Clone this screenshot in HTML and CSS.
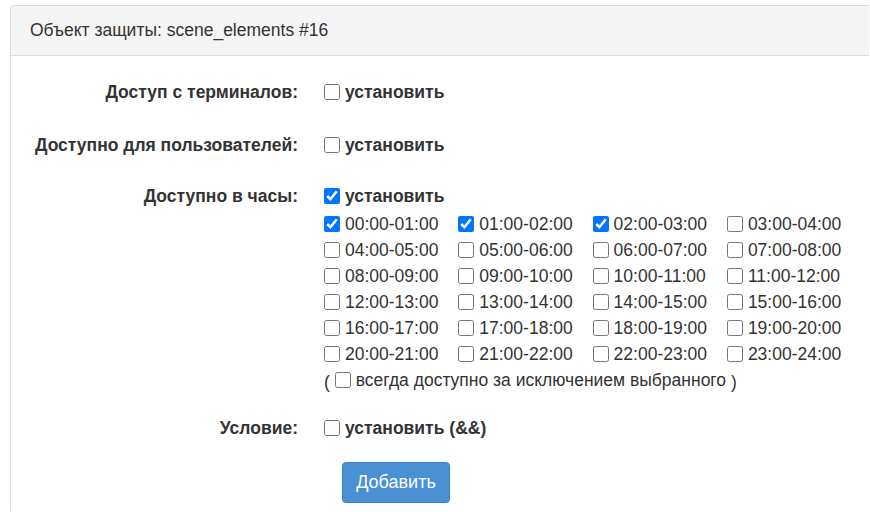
FILE: index.html
```html
<!DOCTYPE html>
<html lang="ru">
<head>
<meta charset="utf-8">
<title>Объект защиты</title>
<link rel="stylesheet" href="styles.css">
</head>
<body>
<div class="panel">
  <div class="panel-heading">Объект защиты: scene_elements #16</div>
  <div class="panel-body">
    <div class="form-row row-1">
      <div class="label">Доступ с терминалов:</div>
      <div class="field"><label class="check bold"><input type="checkbox"> установить</label></div>
    </div>
    <div class="form-row row-2">
      <div class="label">Доступно для пользователей:</div>
      <div class="field"><label class="check bold"><input type="checkbox"> установить</label></div>
    </div>
    <div class="form-row row-3">
      <div class="label">Доступно в часы:</div>
      <div class="field">
        <label class="check bold"><input type="checkbox" checked> установить</label>
        <div class="hours">
          <label class="check"><input type="checkbox" checked> 00:00-01:00</label>
          <label class="check"><input type="checkbox" checked> 01:00-02:00</label>
          <label class="check"><input type="checkbox" checked> 02:00-03:00</label>
          <label class="check"><input type="checkbox"> 03:00-04:00</label>
          <label class="check"><input type="checkbox"> 04:00-05:00</label>
          <label class="check"><input type="checkbox"> 05:00-06:00</label>
          <label class="check"><input type="checkbox"> 06:00-07:00</label>
          <label class="check"><input type="checkbox"> 07:00-08:00</label>
          <label class="check"><input type="checkbox"> 08:00-09:00</label>
          <label class="check"><input type="checkbox"> 09:00-10:00</label>
          <label class="check"><input type="checkbox"> 10:00-11:00</label>
          <label class="check"><input type="checkbox"> 11:00-12:00</label>
          <label class="check"><input type="checkbox"> 12:00-13:00</label>
          <label class="check"><input type="checkbox"> 13:00-14:00</label>
          <label class="check"><input type="checkbox"> 14:00-15:00</label>
          <label class="check"><input type="checkbox"> 15:00-16:00</label>
          <label class="check"><input type="checkbox"> 16:00-17:00</label>
          <label class="check"><input type="checkbox"> 17:00-18:00</label>
          <label class="check"><input type="checkbox"> 18:00-19:00</label>
          <label class="check"><input type="checkbox"> 19:00-20:00</label>
          <label class="check"><input type="checkbox"> 20:00-21:00</label>
          <label class="check"><input type="checkbox"> 21:00-22:00</label>
          <label class="check"><input type="checkbox"> 22:00-23:00</label>
          <label class="check"><input type="checkbox"> 23:00-24:00</label>
        </div>
        <div class="invert">( <label class="check"><input type="checkbox"> всегда доступно за исключением выбранного</label> )</div>
      </div>
    </div>
    <div class="form-row row-4">
      <div class="label">Условие:</div>
      <div class="field"><label class="check bold"><input type="checkbox"> установить (&amp;&amp;)</label></div>
    </div>
    <div class="form-row row-5">
      <div class="label"></div>
      <div class="field"><button class="btn" type="button">Добавить</button></div>
    </div>
  </div>
</div>
</body>
</html>
```
FILE: styles.css
```css
html, body {
  margin: 0;
  padding: 0;
  background: #fff;
  overflow: hidden;
}
body {
  font-family: "Liberation Sans", Arial, Helvetica, sans-serif;
  font-size: 17.5px;
  color: #333;
  width: 870px;
  height: 512px;
}
.panel {
  margin: 5px 0 0 10px;
  width: 859px;
  border: 1px solid #ddd;
  border-right: none;
  border-bottom: none;
  border-radius: 4px 0 0 0;
  height: 506px;
  box-sizing: border-box;
  overflow: hidden;
}
.panel-heading {
  background: #f5f5f5;
  border-bottom: 1px solid #ddd;
  border-radius: 3px 0 0 0;
  height: 49px;
  line-height: 49px;
  padding-left: 19px;
  font-size: 17.5px;
}
.panel-body {
  padding-top: 23px;
}
.form-row {
  display: grid;
  grid-template-columns: 287px 1fr;
  column-gap: 26px;
  line-height: 26px;
}
.label {
  text-align: right;
  font-weight: bold;
}
.row-2 { margin-top: 25px; }
.row-3 { margin-top: 23px; }
.row-4 { margin-top: 20px; }
.row-5 { margin-top: 19px; }
.check {
  display: inline-flex;
  align-items: center;
  white-space: nowrap;
}
.check input {
  margin: 0 5px 0 0;
  width: 16px;
  height: 16px;
}
.bold { font-weight: bold; }
.hours {
  display: grid;
  grid-template-columns: repeat(4, 134.3px);
  margin-top: 0;
}
.invert {
  margin-top: 0;
  white-space: nowrap;
}
.btn {
  font-family: inherit;
  font-size: 18px;
  color: #fff;
  background: #4a91d3;
  border: 1px solid #3a80c4;
  border-radius: 4px;
  width: 108px;
  height: 41px;
  padding: 0;
  line-height: 39px;
  margin-left: 18px;
}
```
